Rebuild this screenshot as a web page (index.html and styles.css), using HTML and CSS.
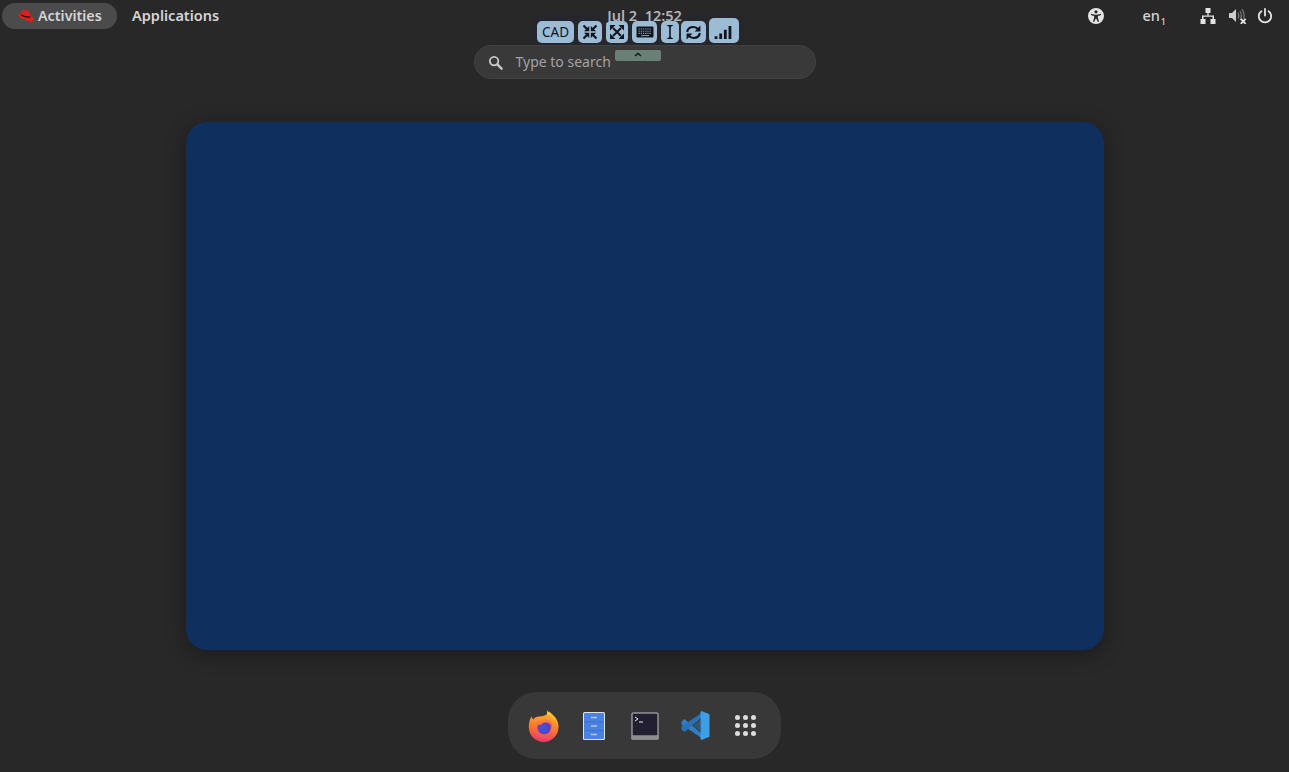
FILE: index.html
```html
<!DOCTYPE html>
<html lang="en">
<head>
<meta charset="utf-8">
<title>Activities overview</title>
<link rel="stylesheet" href="styles.css">
</head>
<body>
<header class="topbar">
  <div class="left">
    <div class="activities">
      <svg class="hat" viewBox="0 0 16 12" width="16" height="12"><path fill="#e0201c" d="M.6 4.200C-.2 5.600 1.600 7.400 4.300 8.800c3 1.600 6.500 2.800 9 2.800 2 0 3-1.300 2.500-2.700-.5-1.300-1.900-2.300-3.500-3C11.800 2.800 10.800 0 8.800.2 7.800.3 7.200.7 6.200.2 4.300-.5 3.300 1.800 2.900 4 2.100 3.700 1.100 3.600.6 4.200z"/><path fill="none" stroke="#1d0d0d" stroke-width="1.100" d="M2.900 4.700c2.900 1.700 6 2.700 9.500 2.400"/></svg>
      <span>Activities</span>
    </div>
    <div class="applications">Applications</div>
  </div>
  <div class="right">
    <svg class="a11y" viewBox="0 0 16 16" width="16" height="16"><path fill="#e4e4e4" fill-rule="evenodd" d="M8 0a8 8 0 1 1 0 16A8 8 0 0 1 8 0zm0 2.200a1.600 1.600 0 1 0 0 3.200 1.600 1.600 0 0 0 0-3.200zM3.200 5.800l-.4 1.200 3.300 1.100v1.600L5 13.600l1.200.4L7.600 10.800h.8l1.400 3.200 1.200-.4-1.100-3.900V8.100l3.300-1.100-.4-1.200-3.800 1H7z"/></svg>
    <div class="lang">en<sub>1</sub></div>
    <svg class="net" viewBox="0 0 16 16" width="16" height="16"><path fill="#e4e4e4" d="M5.500 0h5v5H8.600v2.500H14V11h1.500v5h-5v-5h2V8.800H3.500V11h2v5h-5v-5H2V7.500h5.400V5H5.500z"/></svg>
    <svg class="vol" viewBox="0 0 18 16" width="18" height="16"><path fill="#cfcfcf" d="M0 5h3l4-4v13l-4-4H0z"/><path fill="none" stroke="#6f6f6f" stroke-width="1.400" d="M9 4.500c1 1.800 1 4.200 0 6M11 3c1.600 2.600 1.600 6.400 0 9M13 1c2.200 3.500 2.400 6.500 1.800 9.500"/><path stroke="#e4e4e4" stroke-width="1.900" d="M11.800 10.800l4.800 5M16.600 10.800l-4.800 5"/></svg>
    <svg class="pow" viewBox="0 0 16 16" width="16" height="16"><path fill="none" stroke="#e4e4e4" stroke-width="1.800" stroke-linecap="round" d="M8 1v6.500M4.400 3.200a6.200 6.200 0 1 0 7.200 0"/></svg>
  </div>
  <div class="clock">Jul 2&nbsp;&nbsp;12:52</div>
</header>

<div class="remote">
  <div class="rbtn cad">CAD</div>
  <div class="rbtn b24"><svg viewBox="0 0 16 16" width="16" height="16"><path fill="none" stroke="#12141c" stroke-width="2.200" d="M1.500 1.500l4 4M14.500 1.500l-4 4M1.500 14.500l4-4M14.500 14.500l-4-4"/><path fill="#12141c" d="M7.200 7.200H2L7.200 2zM8.800 7.200H14L8.800 2zM7.200 8.800H2L7.200 14zM8.800 8.800H14L8.800 14z"/></svg></div>
  <div class="rbtn b22"><svg viewBox="0 0 16 16" width="16" height="16"><path fill="none" stroke="#12141c" stroke-width="2" d="M4 4l8 8M12 4l-8 8"/><path fill="#12141c" d="M1 1h5.500L1 6.500zM15 1H9.500L15 6.500zM1 15h5.500L1 9.500zM15 15H9.500L15 9.500z"/></svg></div>
  <div class="rbtn b26"><svg viewBox="0 0 18 14" width="18" height="14"><path fill="#12141c" d="M1.500 1.500h15a1 1 0 0 1 1 1v9a1 1 0 0 1-1 1h-15a1 1 0 0 1-1-1v-9a1 1 0 0 1 1-1z"/><path stroke="#7f9ab2" stroke-width="1.100" stroke-dasharray="1.300 .9" d="M2.500 4h13M2.500 6.200h13M2.500 8.400h13"/><path stroke="#7f9ab2" stroke-width="1.100" d="M5 10.600h8"/></svg></div>
  <div class="rbtn b18"><svg viewBox="0 0 10 16" width="10" height="16"><path fill="none" stroke="#12141c" stroke-width="1.600" d="M5 2v12"/><path fill="#12141c" d="M1.500 1h7L5 3.500zM1.500 15h7L5 12.500z"/></svg></div>
  <div class="rbtn b25"><svg viewBox="0 0 16 16" width="17" height="17"><path fill="none" stroke="#12141c" stroke-width="2" d="M2 7.500C2.500 4.500 5 2.800 8 2.800c2 0 3.400.8 4.500 2.200M14 8.500c-.5 3-3 4.700-6 4.700-2 0-3.400-.8-4.500-2.200"/><path fill="#12141c" d="M14.500 1.500v5.500H9zM1.500 14.500V9H7z"/></svg></div>
  <div class="rbtn signal"><svg viewBox="0 0 18 14" width="18" height="13"><path fill="#12141c" d="M0 11h3v3H0zM5 8h3v6H5zM10 4h3v10h-3zM15 0h3v14h-3z"/></svg></div>
</div>
<div class="handle"><svg viewBox="0 0 8 5" width="8" height="5"><path fill="none" stroke="#12141c" stroke-width="1.500" d="M1 4l3-2.500L7 4"/></svg></div>

<main class="overview">
  <div class="search">
    <svg viewBox="0 0 16 16" width="15" height="15"><circle cx="6.500" cy="6.500" r="4.500" fill="none" stroke="#c8c8c8" stroke-width="2"/><path stroke="#c8c8c8" stroke-width="2.600" stroke-linecap="round" d="M10 10l4.500 4.500"/></svg>
    <span>Type to search</span>
  </div>
  <div class="window"></div>
  <nav class="dock">
    <svg class="ff" viewBox="0 0 32 32" width="32" height="32">
      <defs>
        <linearGradient id="ffa" x1="0.650" y1="0" x2="0.450" y2="1"><stop offset="0" stop-color="#ffb52e"/><stop offset=".55" stop-color="#ff7a2a"/><stop offset="1" stop-color="#f0356a"/></linearGradient>
        <linearGradient id="ffb" x1="0.500" y1="0" x2="0.500" y2="1"><stop offset="0" stop-color="#ffe14a"/><stop offset="1" stop-color="#ff9a24"/></linearGradient>
        <linearGradient id="ffc" x1="0.300" y1="0" x2="0.700" y2="1"><stop offset="0" stop-color="#ff9a24"/><stop offset="1" stop-color="#f2456a"/></linearGradient>
      </defs>
      <path fill="url(#ffa)" d="M1.500 11c.5-2 1.500-3.500 2.500-4.500 0 1.300.4 2.300 1.200 3C6.500 7.500 9 6.300 12 6.500c3-.3 7-1 9-5 3 2.500 9.500 6.500 9.500 15.500C30.500 25 24 32 15.800 32 7.500 32 .8 25.500.8 17.300c0-2.300.2-4.300.7-6.300z"/>
      <path fill="url(#ffb)" d="M19 0c1.700 3 4 4.200 6.500 6.700 3 3 5 6.500 4.800 11-.6-3-2-5.600-4.300-7.600-1.300-3.300-4-5.700-7-6.200.4-1.300.3-2.600 0-3.900z"/>
      <circle cx="16.200" cy="17.500" r="6.800" fill="#5d3cc6"/>
      <circle cx="15.200" cy="18.500" r="4.300" fill="#3f58dc" opacity=".7"/>
      <path fill="url(#ffc)" d="M6 14.500c1.700-3.200 5-5.700 9-6 3.800-.3 7.300 1.800 8.700 5.200.6 1.500.7 3 .4 4.300-.9-2.800-3-5.200-6.200-5.400-1.400-.1-2.500.3-3.400 1-.9 1.200-2.700 1.600-4 1.500-1.600 0-3.200.2-4.500-.6z"/>
      <path fill="#f2557a" d="M7.500 22c1.700 3.700 5.500 6 9.500 5.700 4-.3 7-3 8-6.500-2 2.800-5 4.800-8.800 4.700-3.600-.1-6.800-1.500-8.700-3.900z"/>
    </svg>
    <svg class="files" viewBox="0 0 22 28" width="22" height="28">
      <rect x="0" y="0" width="22" height="28" rx="1.500" fill="#dfe3ea"/>
      <rect x="1" y="1" width="20" height="26" rx=".8" fill="#4a82e4"/>
      <path stroke="#b8c6dc" stroke-width="1.600" d="M8 5.500h6M8 14h6M8 22.500h6"/>
      <path stroke="#3a6cc4" stroke-width=".8" d="M1 9.800h20M1 18.600h20"/>
    </svg>
    <svg class="term" viewBox="0 0 28 28" width="28" height="28">
      <rect x=".5" y=".5" width="27" height="27" rx="1.500" fill="#c2c2c2"/>
      <rect x=".5" y="24" width="27" height="3.500" fill="#8f8f8f"/>
      <rect x="1.500" y="1.500" width="25" height="22" fill="#221f30"/>
      <path fill="none" stroke="#e8e8e8" stroke-width="1" d="M4 5l3 2-3 2"/>
      <path stroke="#e8e8e8" stroke-width="1" d="M8 10h4"/>
    </svg>
    <svg class="vsc" viewBox="0 0 29 29" width="29" height="29">
      <path fill="#2f7fc4" d="M.5 10.500l3-2.500 17 14.500L20.500 27 .5 13.500z"/>
      <path fill="#2a72b5" d="M.5 18.500l3 2.500 17-14.500L20.500 2 .5 15.500z"/>
      <path fill="#3e9fe8" d="M20.500 0L28.500 3.300v22.400L20.500 29l-1-1V1z"/>
      <path fill="#2f7fc4" d="M20.500 7.500v14l-8.600-7z" opacity=".4"/>
    </svg>
    <div class="grid">
      <i></i><i></i><i></i><i></i><i></i><i></i><i></i><i></i><i></i>
    </div>
  </nav>
</main>
</body>
</html>
```
FILE: styles.css
```css
* { box-sizing: border-box; }
html, body { margin: 0; height: 100%; }
body {
  width: 1289px;
  height: 772px;
  overflow: hidden;
  background: #282828;
  font-family: "Noto Sans", "Open Sans", sans-serif;
  color: #d4d4d4;
  position: relative;
  display: flex;
  flex-direction: column;
}
.topbar {
  position: relative;
  flex: none;
  height: 32px;
  display: flex;
  justify-content: space-between;
  align-items: center;
  padding: 0 16px 0 2px;
  font-size: 14.500px;
  font-weight: 600;
}
.left { display: flex; align-items: center; gap: 15px; }
.activities {
  width: 115px;
  height: 26px;
  border-radius: 13px;
  background: #4b4b4b;
  display: flex;
  align-items: center;
  gap: 4px;
  padding: 0 0 2px 16px;
  font-size: 14.300px;
}
.applications { padding-bottom: 2px; }
.hat { flex: none; margin-top: 1px; }
.right { display: flex; align-items: center; }
.lang { margin-left: 38px; font-size: 14.500px; font-weight: 500; padding-bottom: 2px; }
.lang sub { font-size: 9px; line-height: 0; margin-left: 1px; }
.net { margin-left: 34px; }
.vol { margin-left: 13px; }
.pow { margin-left: 10px; }
.clock {
  position: absolute;
  z-index: 1;
  left: 0;
  right: 0;
  top: 5px;
  text-align: center;
  color: #b4b4b4;
  line-height: 20px;
}
.overview {
  flex: 1;
  display: flex;
  flex-direction: column;
  align-items: center;
}
.search {
  margin-top: 13px;
  width: 342px;
  height: 34px;
  border-radius: 17px;
  background: #393939;
  border: 1px solid #414141;
  display: flex;
  align-items: center;
  gap: 13px;
  padding: 0 0 0 13px;
  font-size: 14px;
  color: #a3a3a3;
}
.search span { padding-bottom: 1px; }
.window {
  margin-top: 43px;
  width: 918px;
  height: 528px;
  border-radius: 21px;
  background: #0f2f5e;
  box-shadow: 0 4px 20px rgba(0, 0, 0, .35);
}
.dock {
  margin-top: 42px;
  width: 273px;
  height: 67px;
  border-radius: 28px;
  background: #383838;
  display: flex;
  align-items: center;
  padding-left: 20px;
}
.ff { margin-right: 23px; }
.files { margin-right: 26px; }
.term { margin-right: 22px; }
.vsc { margin-right: 25px; }
.grid {
  display: grid;
  grid-template-columns: repeat(3, 5px);
  gap: 3px;
}
.grid i {
  width: 5px;
  height: 5px;
  border-radius: 50%;
  background: #dcdcdc;
}
.remote {
  position: absolute;
  left: 532px;
  top: 14px;
  height: 31px;
  width: 212px;
  padding: 4px 5px 2px;
  background: rgba(38, 38, 46, .92);
  border-radius: 6px;
  display: flex;
  align-items: flex-end;
  gap: 4px;
}
.rbtn {
  position: relative;
  z-index: 2;
  height: 22px;
  background: #9cbcd6;
  border-radius: 5px;
  display: flex;
  align-items: center;
  justify-content: center;
  color: #12141c;
  font-size: 13.500px;
  font-family: "Noto Sans", sans-serif;
}
.cad { width: 37px; }
.b24 { width: 24px; }
.b22 { width: 22px; }
.b26 { width: 25px; }
.b18 { width: 18px; margin-right: -2px; }
.b25 { width: 25px; margin-right: -1px; }
.signal { width: 30px; height: 25px; padding: 4px 2px 0 0; }
.handle {
  position: absolute;
  left: 615px;
  top: 50px;
  width: 46px;
  height: 11px;
  background: #6a8077;
  border-radius: 2px;
  display: flex;
  justify-content: center;
  padding-top: 2px;
}
.handle svg { display: block; }
```
